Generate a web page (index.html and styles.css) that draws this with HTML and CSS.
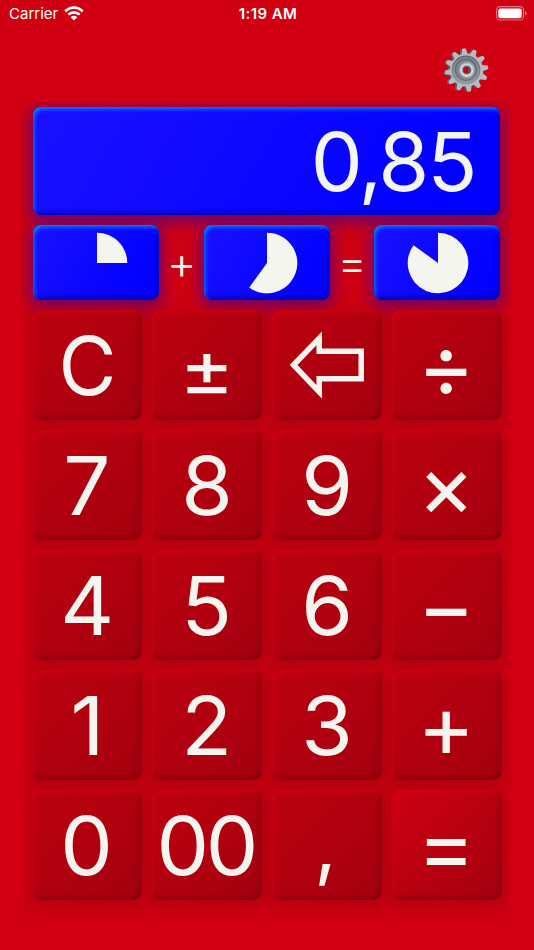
FILE: index.html
```html
<!DOCTYPE html>
<html lang="en">
<head>
<meta charset="utf-8">
<title>Calculator</title>
<link rel="stylesheet" href="styles.css">
</head>
<body>
<header class="status">
  <div class="carrier"><span>Carrier</span>
    <svg class="wifi" width="20" height="15" viewBox="0 0 20 15" fill="none" stroke="#fff" stroke-width="2.6"><path d="M1.2 5.2Q10-2.2 18.8 5.2M4.3 8.6Q10 4 15.7 8.6"/><path d="M6.7 11.2Q10 8.3 13.3 11.2L10 14.6Z" fill="#fff" stroke="none"/></svg>
  </div>
  <div class="time">1:19 AM</div>
  <svg class="battery" width="31" height="15" viewBox="0 0 31 15"><rect x=".6" y=".6" width="27" height="13.4" rx="3.6" fill="none" stroke="#fff" stroke-opacity=".45" stroke-width="1.1"/><rect x="2.3" y="2.4" width="23.4" height="9.8" rx="2" fill="#fff"/><path d="M29.1 5v4.6q1.6-.7 1.6-2.3T29.1 5Z" fill="#fff" fill-opacity=".5"/></svg>
</header>
<div class="toolbar">
  <svg class="gear" width="46" height="46" viewBox="-23 -23 46 46">
    <defs>
      <linearGradient id="metal" x1="0" y1="0" x2="0" y2="1"><stop offset="0" stop-color="#a9b2b9"/><stop offset="1" stop-color="#b5b9c2"/></linearGradient>
      <linearGradient id="dish" x1="0" y1="0" x2="0" y2="1"><stop offset="0" stop-color="#62696d"/><stop offset="1" stop-color="#929a9f"/></linearGradient>
      <path id="tooth" d="M-3.3-15L-1.9-21.2Q0-22.6 1.9-21.2L3.3-15Z"/>
      <g id="wheel"><circle r="16.6"/><g id="half"><use href="#tooth" transform="rotate(-7)"/><use href="#tooth" transform="rotate(23)"/><use href="#tooth" transform="rotate(53)"/><use href="#tooth" transform="rotate(83)"/><use href="#tooth" transform="rotate(113)"/><use href="#tooth" transform="rotate(143)"/></g><use href="#half" transform="rotate(180)"/></g>
    </defs>
    <use href="#wheel" x="-1.2" y=".2" fill="#59646a"/>
    <use href="#wheel" x=".6" fill="#b4bcc3"/>
    <circle r="14.4" fill="url(#dish)"/>
    <circle r="12.4" fill="none" stroke="#9aa2a7" stroke-width=".8"/>
    <circle r="10.4" fill="#858d92" stroke="#596065" stroke-width=".8"/>
    <circle cx="-.6" cy=".3" r="8.2" fill="#788187"/>
    <circle cx=".8" r="7.7" fill="url(#metal)"/>
    <circle cx=".8" r="5.8" fill="none" stroke="#d0d5d9" stroke-width="1.5"/>
    <circle cx=".8" r="4.1" fill="#4a565d"/>
    <ellipse cx="-.2" cy=".1" rx="2.3" ry="3.2" fill="#d10012"/>
  </svg>
</div>
<main class="calc">
  <div class="panel display"><span>0,85</span></div>
  <div class="pies">
    <div class="panel pie"><svg width="62" height="62" viewBox="-31 -31 62 62"><path d="M0 0V-30.3A30.3 30.3 0 0 1 30.3 0Z"/></svg></div>
    <div class="sign"><span>+</span></div>
    <div class="panel pie"><svg width="62" height="62" viewBox="-31 -31 62 62"><path d="M0 0V-30.3A30.3 30.3 0 1 1-17.81 24.51Z"/></svg></div>
    <div class="sign"><span>=</span></div>
    <div class="panel pie"><svg width="62" height="62" viewBox="-31 -31 62 62"><path d="M0 0V-30.3A30.3 30.3 0 1 1-24.51-17.81Z"/></svg></div>
  </div>
  <div class="keys">
    <div class="key clear"><span>C</span></div>
    <div class="key plusminus"><span>±</span></div>
    <div class="key"><svg class="back" width="76" height="70" viewBox="0 0 76 70" fill="none" stroke="#f5f5ef" stroke-width="5.5"><path d="M4.6 35L30.2 8.3V21.2H72.2V48.8H30.2V61.9Z"/></svg></div>
    <div class="key op"><span>÷</span></div>
    <div class="key"><span>7</span></div>
    <div class="key"><span>8</span></div>
    <div class="key"><span>9</span></div>
    <div class="key op"><span>×</span></div>
    <div class="key"><span>4</span></div>
    <div class="key"><span>5</span></div>
    <div class="key"><span>6</span></div>
    <div class="key op"><span>−</span></div>
    <div class="key"><span>1</span></div>
    <div class="key"><span>2</span></div>
    <div class="key"><span>3</span></div>
    <div class="key op"><span>+</span></div>
    <div class="key"><span>0</span></div>
    <div class="key double"><span>00</span></div>
    <div class="key point"><span>,</span></div>
    <div class="key op equals"><span>=</span></div>
  </div>
</main>
</body>
</html>
```
FILE: styles.css
```css
* { box-sizing: border-box; }
body {
  margin: 0;
  height: 950px;
  overflow: hidden;
  background: #d00012;
  color: #f5f5ef;
  font-family: Inter, "Liberation Sans", sans-serif;
}
.status {
  height: 27px;
  padding: 0 7px 0 9px;
  display: grid;
  grid-template-columns: 1fr auto 1fr;
  align-items: center;
  color: #fff;
  font-size: 15px;
}
.carrier { display: flex; align-items: center; gap: 6px; }
.wifi { margin-top: -1px; }
.time { font-weight: 600; letter-spacing: .4px; }
.battery { justify-self: end; margin-top: -1px; }
.toolbar { height: 80px; padding: 20px 45px 0 0; display: flex; justify-content: flex-end; }
/* clips the outer glow at the edges of the pad */
.calc {
  margin: -5px 22px 0;
  padding: 5px 10px 50px;
  overflow: hidden;
}
.panel {
  border-radius: 8px;
  background: linear-gradient(120deg, #1a10ff, #0000ff 90%);
  box-shadow:
    inset 2px 3px 4px -1px #008cff,
    inset -2px -3px 5px -1px #0000a0,
    0 4px 16px 3px rgba(45, 0, 170, .6);
}
.display {
  margin: .3px 1.7px 0 1.4px;
  height: 108px;
  padding-right: 25px;
  display: flex;
  justify-content: flex-end;
  align-items: center;
  font-size: 81px;
  line-height: 1;
  letter-spacing: -2.2px;
}
.display span { transform: translateY(.5px) scaleX(1.02); transform-origin: right; }
.pies { margin: 9.7px 1.7px 0 1.4px; display: grid; grid-template-columns: 126px 1fr 126px 1fr 126px; }
.pie { height: 75px; padding: 1px 0 0 1px; display: flex; align-items: center; justify-content: center; }
.pie svg { fill: #f5f5ef; }
.sign { display: flex; align-items: center; justify-content: center; font-size: 45px; font-weight: 350; line-height: 1; }
.keys { margin-top: 10px; display: grid; grid-template-columns: repeat(4, 110px); gap: 10px; }
.key {
  height: 110.5px;
  margin-bottom: -.5px;
  border-radius: 9px;
  display: flex;
  align-items: center;
  justify-content: center;
  font-size: 81px;
  line-height: 1;
  background: linear-gradient(135deg, #bd0010, #a4000f);
  box-shadow:
    inset 2px 3px 5px -2px #d80014,
    inset -3px -3px 5px -1px #82000c,
    0 4px 15px 4px rgba(130, 0, 14, .36);
}
.key span { transform: translateY(.5px) scaleX(1.03); }
.clear span { transform: translate(1px, .5px) scaleX(.98); }
.op span { transform: translate(-.5px, .5px) scale(1.08); }
.plusminus span { transform: translateY(3.5px) scale(1.04, .94); }
.double span { letter-spacing: -3.4px; margin-right: 2.5px; }
.point span { transform: translate(-1px, -1px) scale(.97); }
.equals { background: linear-gradient(135deg, #cd0012, #a4000f); }
```
